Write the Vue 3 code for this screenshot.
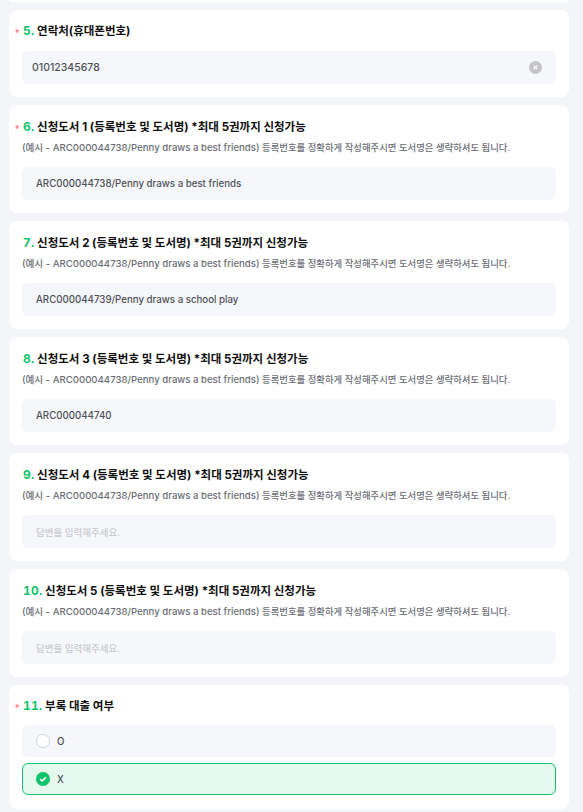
<template>
  <div class="page">
    <div class="prev-card"></div>

    <section class="card">
      <h3 class="title"><span class="star">*</span><span class="num">5.</span> 연락처(휴대폰번호)</h3>
      <div class="field first-field">
        <span class="value phone">01012345678</span>
        <svg class="clear" width="13" height="13" viewBox="0 0 13 13">
          <circle cx="6.5" cy="6.5" r="6.5" fill="#c4c4c6" />
          <path d="M4.6 4.6l3.8 3.8M8.4 4.6l-3.8 3.8" stroke="#fff" stroke-width="1.2" />
        </svg>
      </div>
    </section>

    <section v-for="book in books" :key="book.num" class="card book">
      <h3 class="title">
        <span v-if="book.required" class="star">*</span>
        <span class="num">{{ book.num }}.</span> 신청도서 {{ book.index }} (등록번호 및 도서명) *최대 5권까지 신청가능
      </h3>
      <p class="desc">(예시 - ARC000044738/Penny draws a best friends) <span class="desc-ko">등록번호를 정확하게 작성해주시면 도서명은 생략하셔도 됩니다.</span></p>
      <div class="field">
        <span v-if="book.value" class="value">{{ book.value }}</span>
        <span v-else class="placeholder">답변을 입력해주세요.</span>
      </div>
    </section>

    <section class="card">
      <h3 class="title"><span class="star">*</span><span class="num">11.</span> 부록 대출 여부</h3>
      <div class="options">
        <div class="option">
          <span class="radio"></span>
          <span class="value">O</span>
        </div>
        <div class="option checked">
          <svg width="14" height="14" viewBox="0 0 14 14">
            <circle cx="7" cy="7" r="7" fill="#12c469" />
            <path d="M4.2 7.2l2 1.8 3.6-3.6" fill="none" stroke="#fff" stroke-width="1.6" />
          </svg>
          <span class="value">X</span>
        </div>
      </div>
    </section>
  </div>
</template>

<script setup>
// 신청도서 입력 항목
const books = [
  { num: 6, index: 1, required: true, value: 'ARC000044738/Penny draws a best friends' },
  { num: 7, index: 2, required: false, value: 'ARC000044739/Penny draws a school play' },
  { num: 8, index: 3, required: false, value: 'ARC000044740' },
  { num: 9, index: 4, required: false, value: '' },
  { num: 10, index: 5, required: false, value: '' },
];
</script>

<style>
html,
body {
  background: #f4f5f9;
}
</style>

<style scoped>
.page {
  display: flex;
  flex-direction: column;
  gap: 8px;
  height: 812px;
  overflow: hidden;
  padding: 0 14px 0 9px;
  box-sizing: border-box;
  background: #f4f5f9;
  font-family: Inter, "Noto Sans CJK KR", sans-serif;
}

.prev-card {
  flex: none;
  height: 2px;
  background: #fff;
  border-radius: 0 0 8px 8px;
}

.card {
  flex: none;
  padding: 13px 13px 13px;
  background: #fff;
  border-radius: 8px;
}

.book {
  padding-top: 14px;
}

.title {
  position: relative;
  height: 16px;
  margin: 0;
  padding-left: 1px;
  font-size: 11.5px;
  line-height: 16px;
  font-weight: 700;
  white-space: nowrap;
  color: #111;
}

.star {
  position: absolute;
  left: -7px;
  top: 2px;
  font-family: "Liberation Sans", sans-serif;
  font-size: 11px;
  font-weight: 400;
  color: #f4606a;
}

.num {
  font-size: 12px;
  line-height: 1;
  letter-spacing: 0.2px;
  font-variant-numeric: tabular-nums;
  color: #12c469;
}

.desc {
  height: 14px;
  margin: 6px 0 0;
  font-size: 9.6px;
  line-height: 14px;
  font-weight: 500;
  white-space: nowrap;
  color: #6b6e75;
}

.desc-ko {
  font-size: 9.4px;
}

.field {
  display: flex;
  align-items: center;
  justify-content: space-between;
  height: 33px;
  margin-top: 12px;
  padding: 0 14px;
  background: #f6f7fb;
  border-radius: 6px;
}

.first-field {
  padding: 0 14px 0 10px;
}

.value {
  font-size: 9.7px;
  font-weight: 500;
  color: #4e5158;
}

.phone {
  font-size: 10.5px;
}

.placeholder {
  font-size: 9.5px;
  font-weight: 500;
  color: #c9cbcf;
}

.options {
  display: flex;
  flex-direction: column;
  gap: 6px;
  margin: 11px 0 1px;
}

.option {
  display: flex;
  align-items: center;
  gap: 7px;
  height: 32px;
  padding: 0 14px;
  box-sizing: border-box;
  background: #f6f7fb;
  border-radius: 6px;
}

.option.checked {
  background: #e6f9ee;
  border: 1px solid #12c469;
  padding: 0 13px;
}

.radio {
  width: 14px;
  height: 14px;
  box-sizing: border-box;
  background: #fff;
  border: 1px solid #d4d6da;
  border-radius: 50%;
}
</style>
